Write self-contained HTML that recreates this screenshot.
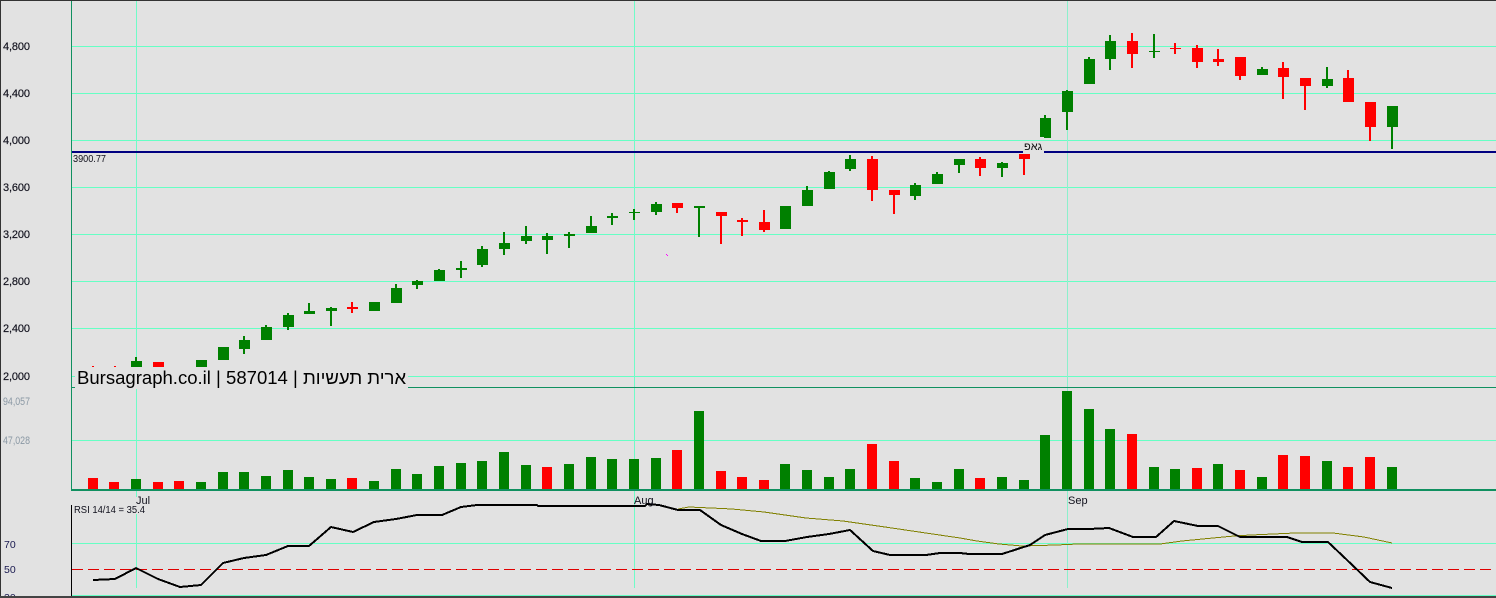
<!DOCTYPE html>
<html><head><meta charset="utf-8"><style>
html,body{margin:0;padding:0;background:#e2e2e2;width:1496px;height:598px;overflow:hidden}
svg{display:block}
text{font-family:"Liberation Sans","Noto Sans CJK JP",sans-serif;font-size:11px;fill:#10101c}
.n{stroke:#10101c;stroke-width:.15px}
</style></head><body>
<svg xmlns="http://www.w3.org/2000/svg" width="1496" height="598" viewBox="0 0 1496 598">
<rect width="1496" height="598" fill="#e2e2e2"/>
<g shape-rendering="crispEdges">
<!-- grid -->
<path fill="#66ffc4" d="M72 46h1424v1H72zM72 93h1424v1H72zM72 140h1424v1H72zM72 187h1424v1H72zM72 234h1424v1H72zM72 281h1424v1H72zM72 328h1424v1H72zM72 376h1424v1H72zM72 440h1424v1H72zM72 543h1424v1H72zM72 595h1424v1H72z"/>
<path fill="#70fcc8" d="M136 0h1v588h-1zM634 0h1v588h-1z"/>
<path fill="#8cf0cc" d="M1067 0h1v588h-1z"/>
<path fill="#109060" d="M71 0h1v387h-1zM71 387h1425v1H71zM71 489h1425v2H71zM71 388h1v102h-1z"/>
<path fill="#000" d="M71 505h1v91h-1z"/>
<line x1="72" y1="569.5" x2="1496" y2="569.5" stroke="#e00000" stroke-width="1" stroke-dasharray="11 5"/>
<path fill="#000080" d="M72 151h1424v2H72z"/>
<!-- volume -->
<path fill="#008000" d="M131 479h10v10h-10zM196 482h10v7h-10zM218 472h10v17h-10zM239 472h10v17h-10zM261 476h10v13h-10zM283 470h10v19h-10zM304 477h10v12h-10zM326 479h10v10h-10zM369 481h10v8h-10zM391 469h10v20h-10zM412 474h10v15h-10zM434 466h10v23h-10zM456 463h10v26h-10zM477 461h10v28h-10zM499 452h10v37h-10zM521 465h10v24h-10zM564 464h10v25h-10zM586 457h10v32h-10zM607 459h10v30h-10zM629 459h10v30h-10zM651 458h10v31h-10zM694 411h10v78h-10zM780 464h10v25h-10zM802 470h10v19h-10zM824 477h10v12h-10zM845 469h10v20h-10zM910 478h10v11h-10zM932 482h10v7h-10zM954 469h10v20h-10zM997 477h10v12h-10zM1019 480h10v9h-10zM1040 435h10v54h-10zM1062 391h10v98h-10zM1084 409h10v80h-10zM1105 429h10v60h-10zM1149 467h10v22h-10zM1170 469h10v20h-10zM1213 464h10v25h-10zM1257 477h10v12h-10zM1322 461h10v28h-10zM1387 467h10v22h-10z"/>
<path fill="#ff0000" d="M88 478h10v11H88zM109 482h10v7h-10zM153 482h10v7h-10zM174 481h10v8h-10zM347 478h10v11h-10zM542 467h10v22h-10zM672 450h10v39h-10zM716 471h10v18h-10zM737 477h10v12h-10zM759 480h10v9h-10zM867 444h10v45h-10zM889 461h10v28h-10zM975 478h10v11h-10zM1127 434h10v55h-10zM1192 468h10v21h-10zM1235 470h10v19h-10zM1278 455h10v34h-10zM1300 456h10v33h-10zM1343 467h10v22h-10zM1365 457h10v32h-10z"/>
<!-- green candles -->
<path fill="#008000" d="M131 361h11v6h-11zM135 357h2v4h-2zM196 360h11v7h-11zM218 347h11v13h-11zM239 340h11v9h-11zM243 336h2v18h-2zM261 327h11v13h-11zM265 325h2v2h-2zM283 315h11v12h-11zM287 313h2v17h-2zM304 311h11v3h-11zM308 303h2v8h-2zM326 308h11v3h-11zM330 307h2v19h-2zM369 302h11v9h-11zM391 288h11v15h-11zM395 284h2v4h-2zM412 281h11v4h-11zM416 280h2v9h-2zM434 270h11v11h-11zM438 269h2v1h-2zM456 268h11v2h-11zM460 261h2v17h-2zM477 249h11v16h-11zM481 246h2v21h-2zM499 243h11v6h-11zM503 232h2v23h-2zM521 236h11v5h-11zM525 226h2v18h-2zM542 236h11v4h-11zM546 233h2v21h-2zM564 234h11v2h-11zM568 232h2v16h-2zM586 226h11v7h-11zM590 216h2v10h-2zM607 216h11v2h-11zM611 213h2v12h-2zM629 212h11v1h-11zM633 209h2v11h-2zM651 204h11v8h-11zM655 202h2v13h-2zM694 206h11v2h-11zM698 206h2v31h-2zM780 206h11v23h-11zM802 190h11v16h-11zM806 186h2v4h-2zM824 172h11v17h-11zM828 171h2v1h-2zM845 159h11v10h-11zM849 155h2v16h-2zM910 185h11v11h-11zM914 183h2v17h-2zM932 174h11v10h-11zM936 172h2v2h-2zM954 159h11v6h-11zM958 159h2v14h-2zM997 163h11v5h-11zM1001 162h2v15h-2zM1040 118h11v19h-11zM1044 137h7v1h-7zM1044 115h2v3h-2zM1062 91h11v21h-11zM1066 90h2v40h-2zM1084 59h11v25h-11zM1088 57h2v2h-2zM1105 41h11v18h-11zM1109 35h2v35h-2zM1149 51h11v1h-11zM1153 34h2v24h-2zM1257 69h11v6h-11zM1261 67h2v2h-2zM1322 79h11v7h-11zM1326 67h2v21h-2zM1387 106h11v21h-11zM1391 127h2v22h-2z"/>
<!-- red candles -->
<path fill="#ff0000" d="M92 366h2v1h-2zM114 366h2v1h-2zM153 362h11v5h-11zM347 307h11v2h-11zM351 302h2v11h-2zM672 203h11v5h-11zM676 208h2v5h-2zM716 212h11v4h-11zM720 216h2v28h-2zM737 220h11v2h-11zM741 218h2v18h-2zM759 222h11v8h-11zM763 210h2v22h-2zM867 159h11v31h-11zM871 156h2v45h-2zM889 190h11v5h-11zM893 195h2v19h-2zM975 159h11v9h-11zM979 157h2v19h-2zM1019 154h11v5h-11zM1023 159h2v16h-2zM1127 41h11v13h-11zM1131 33h2v35h-2zM1170 48h11v1h-11zM1174 43h2v11h-2zM1192 48h11v14h-11zM1196 45h2v23h-2zM1213 59h11v3h-11zM1217 49h2v17h-2zM1235 57h11v19h-11zM1239 76h2v4h-2zM1278 68h11v9h-11zM1282 62h2v37h-2zM1300 78h11v8h-11zM1304 86h2v24h-2zM1343 78h11v24h-11zM1347 70h2v8h-2zM1365 102h11v25h-11zM1369 127h2v14h-2z"/>
<path fill="#ff00ff" d="M666 254h1v1h-1zM667 255h1v1h-1z"/>
<!-- RSI -->
<polyline fill="none" stroke="#808000" stroke-width="1" points="678,509 689,507 711,508 732,509 764,512 806,518 843,521 885,527 919,532 960,538 977,541 999,544 1022,546 1056,545 1078,544 1160,544 1182,541 1213,538 1234,536 1251,535 1295,533 1333,533 1364,537 1392,543"/>
<polyline fill="none" stroke="#000" stroke-width="2" points="93,580 115,579 136,568 158,579 180,587 201,585 223,563 244,558 266,555 288,546 309,546 331,527 353,532 374,522 396,519 417,515 442,515 461,507 477,505 537,505 538,506 645,506 647,504 659,505 678,510 700,510 721,525 742,534 761,541 785,541 807,537 829,534 850,530 873,551 890,555 926,555 940,553 960,553 969,554 1002,554 1030,545 1045,535 1068,529 1089,529 1109,528 1133,537 1156,537 1174,521 1198,526 1218,526 1240,537 1287,537 1302,542 1328,542 1347,560 1370,582 1392,588"/>
<!-- covers -->
<rect x="1023" y="141" width="21" height="13" fill="#e2e2e2"/>
<rect x="75" y="367" width="333" height="22" fill="#e2e2e2"/>
<rect x="73" y="497" width="73" height="17" fill="#e2e2e2"/>
<rect x="0" y="0" width="1496" height="1" fill="#333"/>
<rect x="0" y="0" width="1" height="598" fill="#333"/>
</g>
<text class="n" x="3" y="50" textLength="27">4,800</text>
<text class="n" x="3" y="97" textLength="27">4,400</text>
<text class="n" x="3" y="144" textLength="27">4,000</text>
<text class="n" x="3" y="191" textLength="27">3,600</text>
<text class="n" x="3" y="238" textLength="27">3,200</text>
<text class="n" x="3" y="285" textLength="27">2,800</text>
<text class="n" x="3" y="332" textLength="27">2,400</text>
<text class="n" x="3" y="380" textLength="27">2,000</text>
<text x="3" y="405" textLength="27" lengthAdjust="spacingAndGlyphs" style="fill:#8a98a4">94,057</text>
<text x="3" y="444" textLength="27" lengthAdjust="spacingAndGlyphs" style="fill:#8a98a4">47,028</text>
<text x="73" y="162" textLength="33" lengthAdjust="spacingAndGlyphs" style="font-size:10px">3900.77</text>
<text x="4" y="548" style="fill:#1a1a50;font-size:10.5px">70</text>
<text x="4" y="573" style="fill:#1a1a50;font-size:10.5px">50</text>
<text x="4" y="601" style="fill:#1a1a50;font-size:10.5px">30</text>
<text x="136" y="504">Jul</text>
<text x="634" y="504">Aug</text>
<text x="1068" y="504">Sep</text>
<text x="74" y="513" textLength="71" lengthAdjust="spacingAndGlyphs" style="font-size:10px">RSI 14/14 = 35.4</text>
<text x="1024" y="150" style="font-size:11px;fill:#111">גאפ</text>
<text x="77" y="384" style="font-size:18.55px;fill:#000">Bursagraph.co.il | 587014 | ארית תעשיות</text>
<g shape-rendering="crispEdges">
<rect x="0" y="596" width="1496" height="2" fill="#444"/>
</g>
</svg>
</body></html>
